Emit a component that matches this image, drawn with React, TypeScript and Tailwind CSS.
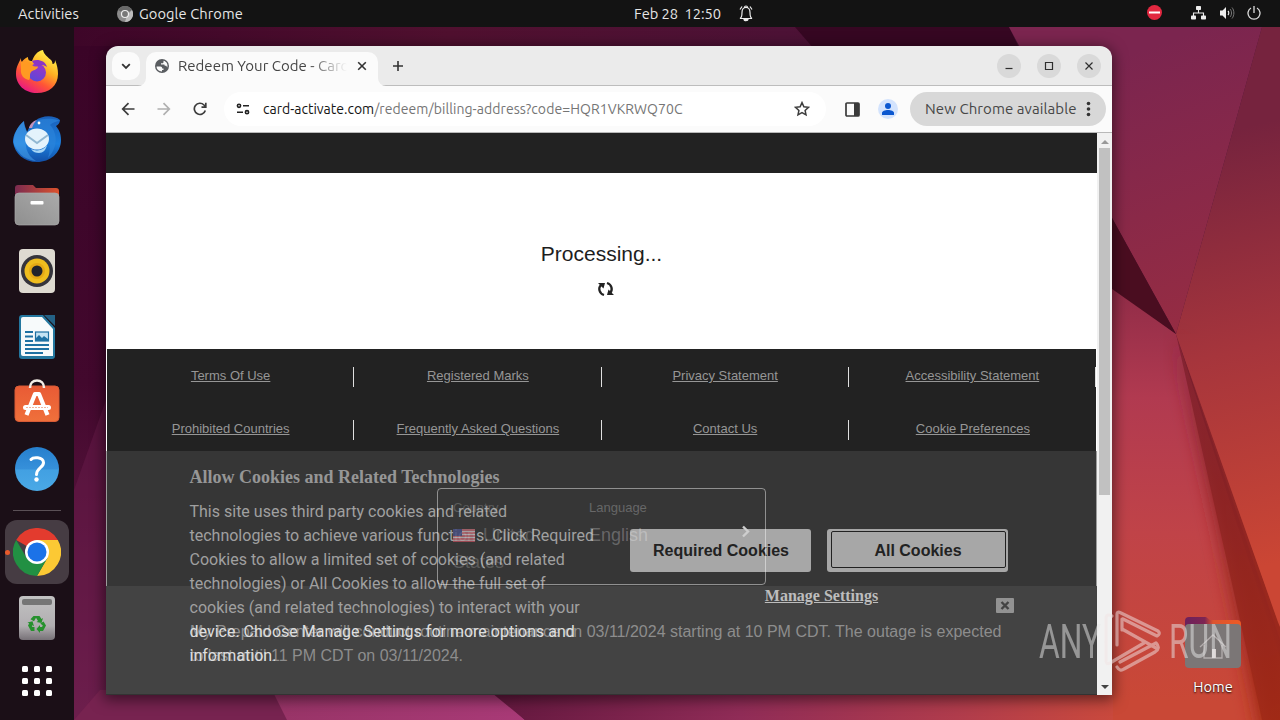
import type { ReactNode } from 'react';

const UI = "font-['Ubuntu','Noto_Sans',sans-serif]";
const ARIAL = "font-['Liberation_Sans',Arial,sans-serif]";
const SERIF = "font-['Liberation_Serif',serif]";

function Wallpaper() {
  return (
    <svg className="absolute inset-0" width="1280" height="720" viewBox="0 0 1280 720">
      <defs>
        <linearGradient id="wLeft" x1="0" y1="0" x2="0" y2="1">
          <stop offset="0" stopColor="#3a0427" />
          <stop offset="0.5" stopColor="#42082d" />
          <stop offset="1" stopColor="#6f204e" />
        </linearGradient>
        <linearGradient id="wTop" x1="0" y1="0" x2="1" y2="0">
          <stop offset="0" stopColor="#3a0427" />
          <stop offset="0.4" stopColor="#50102f" />
          <stop offset="0.7" stopColor="#4d1236" />
          <stop offset="1" stopColor="#42102f" />
        </linearGradient>
        <linearGradient id="wUpper" gradientUnits="userSpaceOnUse" x1="1110" y1="60" x2="1200" y2="320">
          <stop offset="0" stopColor="#7b254f" />
          <stop offset="1" stopColor="#952c43" />
        </linearGradient>
        <linearGradient id="wRight" gradientUnits="userSpaceOnUse" x1="1190" y1="140" x2="1290" y2="560">
          <stop offset="0" stopColor="#76233e" />
          <stop offset="0.5" stopColor="#a6353c" />
          <stop offset="1" stopColor="#cb4634" />
        </linearGradient>
        <linearGradient id="wLower" gradientUnits="userSpaceOnUse" x1="1140" y1="280" x2="1130" y2="700">
          <stop offset="0" stopColor="#8e2b47" />
          <stop offset="0.28" stopColor="#b13a50" />
          <stop offset="0.6" stopColor="#c04348" />
          <stop offset="1" stopColor="#c94836" />
        </linearGradient>
        <linearGradient id="wBand" gradientUnits="userSpaceOnUse" x1="1180" y1="340" x2="1270" y2="720">
          <stop offset="0" stopColor="#7b1f2d" />
          <stop offset="0.6" stopColor="#93251f" />
          <stop offset="1" stopColor="#a02916" />
        </linearGradient>
        <linearGradient id="wBottom" gradientUnits="userSpaceOnUse" x1="492" y1="0" x2="1112" y2="0">
          <stop offset="0" stopColor="#64183f" />
          <stop offset="0.4" stopColor="#902c57" />
          <stop offset="0.75" stopColor="#b03c4c" />
          <stop offset="1" stopColor="#c9493d" />
        </linearGradient>
        <linearGradient id="wMagenta" gradientUnits="userSpaceOnUse" x1="272" y1="0" x2="525" y2="0">
          <stop offset="0" stopColor="#983467" />
          <stop offset="1" stopColor="#a93a77" />
        </linearGradient>
        <filter id="soft"><feGaussianBlur stdDeviation="9" /></filter>
      </defs>
      <rect width="1280" height="720" fill="#4d1236" />
      <rect width="1120" height="60" fill="url(#wTop)" />
      <polygon points="795,27 1009,27 1020,50 815,50" fill="#360722" />
      <rect y="46" width="300" height="674" fill="url(#wLeft)" />
      <polygon points="106,400 74,490 74,720 300,720 260,600" fill="#6a1c4b" opacity=".45" />
      <polygon points="1009,27 1262,27 1176,334 1112,218" fill="url(#wUpper)" />
      <polygon points="1262,27 1280,27 1280,640 1176,334" fill="url(#wRight)" />
      <polygon points="1090,270 1176,334 1300,720 1000,720" fill="url(#wLower)" />
      <polygon points="1095,187 1176,334 1095,277" fill="#4a0d20" />
      <polygon points="1176,334 1290,640 1300,740 1262,740 1225,560" fill="url(#wBand)" filter="url(#soft)" />
      <polygon points="1176,334 1280,627 1280,720 1262,720 1230,575" fill="url(#wBand)" opacity=".8" />
      <polygon points="1176,334 1290,334 1290,650 1278,622" fill="url(#wRight)" />
      <polygon points="100,690 275,690 290,720 74,720" fill="#772350" />
      <polygon points="262,670 470,670 525,720 287,720" fill="url(#wMagenta)" />
      <polygon points="470,675 1113,675 1113,720 525,720" fill="url(#wBottom)" />
    </svg>
  );
}

function FirefoxIcon() {
  return (
    <svg className="-mt-0.5" width="44" height="46" viewBox="0 0 44 46">
      <defs>
        <linearGradient id="ff" x1="0.8" y1="0.1" x2="0.25" y2="1">
          <stop offset="0" stopColor="#fff04a" />
          <stop offset="0.35" stopColor="#ffae22" />
          <stop offset="0.65" stopColor="#ff5436" />
          <stop offset="1" stopColor="#e6138a" />
        </linearGradient>
        <linearGradient id="ffp" x1="0.8" y1="0" x2="0.3" y2="1">
          <stop offset="0" stopColor="#a033c6" />
          <stop offset="1" stopColor="#5a48d8" />
        </linearGradient>
      </defs>
      <path d="M28 1c1 5 5 7 8 10 2 2 1 4 2 4 2 0 2-3 2-4 2 5 3 9 3 14 0 12-9 19-21 19S1 36 1 25C1 17 4 14 6 9c0 2 0 3 1 4 1-2 3-4 6-5 0 3 1 4 4 4 2-5 5-10 11-11z" fill="url(#ff)" />
      <circle cx="22" cy="23.500" r="9" fill="url(#ffp)" />
      <path d="M6 13c5-2 10 0 12 4 3 1 5 0 5 1-1 3-5 3-7 5-2 3 0 5-2 8-5-1-9-5-8-11z" fill="#ff9a22" />
      <path d="M17 12c5-2 13-1 15 6-3-2-5-2-7-1-3 0-6-1-8-5z" fill="#8a35c5" />
    </svg>
  );
}

function ThunderbirdIcon() {
  return (
    <svg width="50" height="48" viewBox="0 0 50 48">
      <defs>
        <linearGradient id="tb" x1="0.5" y1="0" x2="0.5" y2="1">
          <stop offset="0" stopColor="#1a5fb8" />
          <stop offset="0.6" stopColor="#1d7fdd" />
          <stop offset="1" stopColor="#1250a8" />
        </linearGradient>
      </defs>
      <path d="M12 6C5 12 1 20 1 27c2 12 11 20 24 20s24-9 24-22c0-7-2-10-5-14 2-1 4-3 4-6-6-5-18-5-25 1-3 3-6 6-8 11-1-4-3-7-3-11z" fill="url(#tb)" />
      <path d="M12 6C5 12 1 20 2 29c5 12 13 16 22 17C14 40 12 30 15 17c-2-3-3-7-3-11z" fill="#4ba5ed" opacity=".5" />
      <path d="M18 13c2-5 8-9 14-9 8-1 14 1 16 2-3 0-8 2-10 4 8 8 8 23-2 33 4-12 1-22-5-29-4-1-8 0-13-1z" fill="#2b83da" opacity=".7" />
      <ellipse cx="25" cy="24" rx="12" ry="10.500" fill="#e4f3fc" />
      <path d="M14 20l11 8 11-8" fill="none" stroke="#91b8d2" strokeWidth="2" />
      <path d="M19 34c6 3 13 1 16-4-1 5-4 8-8 8-3 0-6-1-8-4z" fill="#a6d6f6" />
      <path d="M17 13c1-4 4-7 8-8-3 3-4 5-5 8z" fill="#c293bd" />
      <circle cx="27" cy="8" r="1.400" fill="#fff" />
    </svg>
  );
}

function FilesIcon() {
  return (
    <svg width="46" height="42" viewBox="0 0 46 42">
      <defs>
        <linearGradient id="fTop"><stop stopColor="#7b2b50" /><stop offset="1" stopColor="#dc522d" /></linearGradient>
        <linearGradient id="fBody" x1="0" y1="1" x2="1" y2="0"><stop stopColor="#8f8f8f" /><stop offset="1" stopColor="#aaa" /></linearGradient>
      </defs>
      <path d="M1 4a3 3 0 0 1 3-3h15l3 3h20a3 3 0 0 1 3 3v8H1z" fill="url(#fTop)" />
      <rect x="1" y="9" width="44" height="32" rx="4" fill="url(#fBody)" stroke="#aaa" strokeWidth=".7" />
      <rect x="16.500" y="17" width="13" height="3.500" rx="1" fill="#fff" />
    </svg>
  );
}

function RhythmboxIcon() {
  return (
    <svg width="38" height="46" viewBox="0 0 38 46">
      <rect x="1" y="1" width="36" height="44" rx="4" fill="#dedad1" />
      <circle cx="19" cy="23" r="16" fill="#35343c" />
      <circle cx="19" cy="23" r="12.500" fill="#efbd1e" />
      <circle cx="19" cy="23" r="8" fill="#e5a915" />
      <circle cx="19" cy="23" r="5.500" fill="#22242c" />
    </svg>
  );
}

function WriterIcon() {
  return (
    <svg width="38" height="46" viewBox="0 0 38 46">
      <path d="M4 1h21l12 13v28a3 3 0 0 1-3 3H4a3 3 0 0 1-3-3V4a3 3 0 0 1 3-3z" fill="#24779f" />
      <path d="M26 1h11v11z" fill="#246185" />
      <path d="M5 3h19l11 12v27H5a2 2 0 0 1-2-2V5a2 2 0 0 1 2-2z" fill="#f7fafb" />
      <path d="M7 18h8M7 22.500h8M7 27h8M7 31h24M7 35h24M7 39h18" stroke="#1e71a3" strokeWidth="1.900" />
      <rect x="17.500" y="18" width="13" height="9" fill="#c4e3f3" stroke="#1e71a3" strokeWidth="1.200" />
      <path d="M18 27v-3l3-3 3 3 2-2 4 3v2z" fill="#1e71a3" />
    </svg>
  );
}

function SoftwareIcon() {
  return (
    <svg width="46" height="46" viewBox="0 0 46 46">
      <defs><linearGradient id="bag" x2="0" y2="1"><stop stopColor="#e95b35" /><stop offset="1" stopColor="#ef703b" /></linearGradient></defs>
      <rect x="1" y="8" width="44" height="35.500" rx="4" fill="url(#bag)" stroke="#d85b36" />
      <path d="M16 10c0-5 3-7.500 7-7.500s7 2.500 7 7.500" fill="none" stroke="#f4eee6" strokeWidth="2.500" />
      <path d="M12.500 37l8.500-21h4l8.500 21" fill="none" stroke="#fff" strokeWidth="4.200" strokeLinejoin="round" />
      <rect x="9" y="27" width="28" height="5" rx="2.500" fill="#fff" />
      <path d="M12 29.500h22" stroke="#f0a183" strokeWidth=".8" strokeDasharray="2 1" />
    </svg>
  );
}

function HelpIcon() {
  return (
    <svg width="46" height="46" viewBox="0 0 46 46">
      <defs><linearGradient id="help" x2="0" y2="1"><stop stopColor="#267fcd" /><stop offset=".5" stopColor="#3690da" /><stop offset=".52" stopColor="#42a0e2" /><stop offset="1" stopColor="#4aa9e6" /></linearGradient></defs>
      <circle cx="23" cy="23" r="22" fill="url(#help)" />
      <path d="M17 13.500c2-2.500 12-3 12.500 3 .3 5-7 5.500-7 12" fill="none" stroke="#fff" strokeWidth="3" strokeLinecap="round" />
      <circle cx="22.500" cy="33.500" r="2.200" fill="#fff" />
    </svg>
  );
}

function ChromeIcon() {
  return (
    <svg width="48" height="48" viewBox="0 0 48 48">
      <path d="M24 24L3.200 12A24 24 0 0 1 44.800 12z" fill="#e33b2e" />
      <path d="M24 12H44.800A24 24 0 0 1 24 48L34.400 30z" fill="#fcc934" />
      <path d="M13.600 30L3.200 12A24 24 0 0 0 24 48L34.400 30z" fill="#229043" />
      <circle cx="24" cy="24" r="12" fill="#fff" />
      <circle cx="24" cy="24" r="9.500" fill="#1b72e8" />
    </svg>
  );
}

function TrashIcon() {
  return (
    <svg width="38" height="46" viewBox="0 0 38 46">
      <defs><linearGradient id="bin" x2="0" y2="1"><stop stopColor="#c2c2c2" /><stop offset=".68" stopColor="#b1aeb1" /><stop offset="1" stopColor="#777177" /></linearGradient></defs>
      <rect x="1" y="1" width="36" height="44" rx="4" fill="url(#bin)" />
      <rect x="4" y="4" width="30" height="6" rx="2" fill="#757575" />
      <g fill="#26912d">
        <path d="M15.500 21h6l2 3 1.500-1-1.500 5-5-1 1.500-1-2-3.200-2 3.400-3.500-2z" />
        <path d="M25.500 26.500l2.500 4-3 5.500h-3v2l-3.500-4 3.500-4v2h2l.8-1.500-2.500-2z" />
        <path d="M16.500 32v4H13l-3-5.500 1.200-2-1.700-1 5-1.200 1.500 5-1.700-1-.5.8.6.900z" />
      </g>
    </svg>
  );
}

function DockItem({ children }: { children: ReactNode }) {
  return <div className="flex h-[66px] w-full items-center justify-center">{children}</div>;
}

function Dock() {
  return (
    <aside className="relative flex w-[74px] flex-col items-center bg-[#1b0f17] pt-[13px]">
      <DockItem><FirefoxIcon /></DockItem>
      <DockItem><ThunderbirdIcon /></DockItem>
      <DockItem><FilesIcon /></DockItem>
      <DockItem><RhythmboxIcon /></DockItem>
      <DockItem><WriterIcon /></DockItem>
      <div className="flex h-[66px] items-center justify-center pb-[5px]"><SoftwareIcon /></div>
      <DockItem><HelpIcon /></DockItem>
      <div className="mt-[8px] h-px w-12 bg-[#5a5056]" />
      <div className="relative mt-[9px] flex size-16 items-center justify-center rounded-xl bg-[#463c43]">
        <span className="absolute left-0 size-[5px] rounded-full bg-[#e95a2b]" />
        <ChromeIcon />
      </div>
      <div className="mt-[11px]"><TrashIcon /></div>
      <div className="mt-[25px] grid grid-cols-3 gap-1.5">
        {Array.from({ length: 9 }, (_, i) => <span key={i} className="size-1.5 rounded-[1.5px] bg-white" />)}
      </div>
    </aside>
  );
}

function TopBar() {
  return (
    <header className={`relative flex h-[27px] items-center bg-[#131313] text-[14.67px] text-[#e6e6e6] ${UI}`}>
      <span className="ml-[18px] w-[99px] tracking-[0.08px]">Activities</span>
      <svg width="16" height="16" viewBox="0 0 16 16">
        <circle cx="8" cy="8" r="8" fill="#8b8b8b" />
        <path d="M8 8L1 4a8 8 0 0 1 14 0z" fill="#686868" />
        <path d="M10 9L8 16A8 8 0 0 0 15 4z" fill="#bcbcbc" />
        <circle cx="8" cy="8" r="3.500" fill="#777" stroke="#eee" strokeWidth="1.200" />
      </svg>
      <span className="ml-1.5 w-[495px] tracking-[0.08px]">Google Chrome</span>
      <span className="whitespace-pre tracking-[-0.05px]">Feb 28  12:50</span>
      <svg className="absolute left-[738px] top-[5px]" width="16" height="17" viewBox="0 0 16 17" fill="none" stroke="#eee" strokeWidth="1.200">
        <path d="M2 13.500c2-1 2-3 2-6C4 4.500 5.500 2.500 8 2.500s4 2 4 5c0 3 0 5 2 6zM6.500 2.500C6.500.5 9.500.5 9.500 2.500M2 4.500L4 1.500M14 4.500L12 1.500" />
        <path d="M6 14.500h4c0 1.500-4 1.500-4 0z" fill="#eee" />
      </svg>
      <div className="absolute right-[19px] top-[5px] flex items-center">
        <svg width="15" height="15" viewBox="0 0 15 15"><circle cx="7.500" cy="7.500" r="7.500" fill="#e22840" /><rect x="2" y="6.500" width="11" height="2" fill="#fff" /></svg>
        <svg className="ml-7" width="17" height="14" viewBox="0 0 17 14" fill="#eee">
          <rect x="6" y="0" width="5" height="4" rx=".8" /><rect x="1" y="9.500" width="5" height="4" rx=".8" /><rect x="11" y="9.500" width="5" height="4" rx=".8" />
          <path d="M8.500 4v3M3.500 10V7h10v3" fill="none" stroke="#eee" strokeWidth="1.100" />
        </svg>
        <svg className="ml-3" width="16" height="14" viewBox="0 0 16 14" fill="none">
          <path d="M1 4.500h2.500L7 1v12L3.500 9.500H1z" fill="#eee" />
          <path d="M9 5c1 1 1 3 0 4" stroke="#eee" strokeWidth="1.200" />
          <path d="M11 3c2 2 2 6 0 8M13 1.500c2.500 3 2.500 8 0 11" stroke="#777" />
        </svg>
        <svg className="ml-3" width="14" height="14" viewBox="0 0 14 14" fill="none" stroke="#ddd" strokeWidth="1.300">
          <path d="M4 2a6 6 0 1 0 6 0M7 0v7" />
        </svg>
      </div>
    </header>
  );
}

function TabStrip() {
  return (
    <div className="relative flex h-10 shrink-0 rounded-t-xl border-b border-[#bdbdbd] bg-[#ebebeb]">
      <div className="ml-1.5 mt-1.5 flex size-7 items-center justify-center rounded-[10px] bg-[#fbfbfb]">
        <svg width="10" height="7" viewBox="0 0 10 7" fill="none" stroke="#333" strokeWidth="1.800"><path d="M1.200 1.200L5 5l3.800-3.800" /></svg>
      </div>
      <div className="relative ml-1.5 mt-1.5 -mb-px flex w-[232px] items-center rounded-t-[10px] bg-[#fbfbfb] pb-[6px]">
        <svg className="absolute -left-2 bottom-0" width="8" height="8"><path d="M8 0v8H0a8 8 0 0 0 8-8z" fill="#fbfbfb" /></svg>
        <svg className="absolute -right-2 bottom-0" width="8" height="8"><path d="M0 0v8h8a8 8 0 0 1-8-8z" fill="#fbfbfb" /></svg>
        <svg className="ml-[9px]" width="14" height="14" viewBox="0 0 14 14">
          <circle cx="7" cy="7" r="7" fill="#5a5d61" />
          <path d="M1.600 7.500h3.600c1.500 0 2 .8 2 2h1.300v1.500H7v1.400C4 12.500 1.500 10.500 1.600 7.500z" fill="#fbfbfb" />
          <path d="M8.500 1.700v1.200c0 .8-.5 1.300-1.300 1.300H6v1.300h2.700c.8 0 1 .5 1 1.300h1.600l.9 1.700C13.300 5.500 11.500 2.300 8.500 1.700z" fill="#fbfbfb" />
        </svg>
        <span className={`ml-[9px] w-[169px] overflow-hidden whitespace-nowrap text-[15px] leading-5 text-[#454545] [mask-image:linear-gradient(to_right,black_130px,transparent_169px)] ${UI}`}>Redeem Your Code - Card</span>
        <svg className="ml-[10px]" width="10" height="10" viewBox="0 0 10 10" stroke="#333" strokeWidth="1.600"><path d="M1.200 1.200l7.600 7.600M8.800 1.200L1.200 8.800" /></svg>
      </div>
      <svg className="ml-[15px] mt-[15px]" width="10" height="10" viewBox="0 0 10 10" stroke="#333" strokeWidth="1.600"><path d="M5 0v10M0 5h10" /></svg>
      <div className="ml-auto mr-[11px] mt-2 flex gap-[16px]">
        {['M2.500 8.500h7', 'M2.500 2.500h7v7h-7z', 'M2.500 2.500l7 7M9.500 2.500l-7 7'].map(d => (
          <span key={d} className="flex size-6 items-center justify-center rounded-full bg-[#d9d9d9]">
            <svg width="12" height="12" viewBox="0 0 12 12" fill="none" stroke="#2e2e2e" strokeWidth="1.200"><path d={d} /></svg>
          </span>
        ))}
      </div>
    </div>
  );
}

function Toolbar() {
  return (
    <div className={`flex h-[47px] shrink-0 items-center border-b border-[#b9b9b9] bg-[#fbfbfb] ${UI}`}>
      <svg className="ml-[15px]" width="14" height="14" viewBox="0 0 14 14" fill="none" stroke="#3c3c3c" strokeWidth="1.700"><path d="M13.500 7H2M7.500 1.200L1.700 7l5.800 5.800" /></svg>
      <svg className="ml-[22px]" width="14" height="14" viewBox="0 0 14 14" fill="none" stroke="#b0b0b0" strokeWidth="1.700"><path d="M.5 7H12M6.500 1.200L12.300 7l-5.800 5.800" /></svg>
      <svg className="ml-[22px]" width="14" height="14" viewBox="0 0 14 14" fill="none" stroke="#3c3c3c" strokeWidth="1.700"><path d="M12.300 8.500A5.600 5.600 0 1 1 11 3l1.500 1.500M12.800.8v4.400H8.500" /></svg>
      <div className="ml-[17px] flex h-[34px] w-[602px] items-center rounded-full bg-white">
        <svg className="ml-[12px]" width="14" height="12" viewBox="0 0 14 12" fill="none" stroke="#222" strokeWidth="1.600"><circle cx="3" cy="2.800" r="1.600" /><path d="M7 2.800h6M1 9.200h6" /><circle cx="11" cy="9.200" r="1.600" /></svg>
        <div className="ml-[13px] w-[531px] whitespace-nowrap text-[14px] leading-5 text-[#757575]">
          <span className="text-[#151515]">card-activate.com</span>
          <span className="tracking-[0.07px]">/redeem/billing-address?code=HQR1VKRWQ70C</span>
        </div>
        <svg width="16" height="16" viewBox="0 0 16 16" fill="none" stroke="#3c3c3c" strokeWidth="1.500"><path d="M8 1.600l1.900 4.200 4.600.5-3.400 3.100.9 4.500-4-2.300-4 2.300.9-4.500L1.500 6.300l4.600-.5z" /></svg>
      </div>
      <svg className="ml-[19px]" width="15" height="15" viewBox="0 0 15 15"><rect x="1" y="1" width="13" height="13" rx="1" fill="none" stroke="#3a3a3a" strokeWidth="1.700" /><path d="M9 1h5v13H9z" fill="#3a3a3a" /></svg>
      <svg className="ml-[18px]" width="20" height="20" viewBox="0 0 20 20"><circle cx="10" cy="10" r="10" fill="#d3e3fd" /><circle cx="10" cy="7" r="3" fill="#0b57d0" /><path d="M4 16v-2c0-4 12-4 12 0v2z" fill="#0b57d0" /></svg>
      <div className="ml-[12px] flex h-[34px] w-[196px] items-center rounded-full bg-[#d8d8d8] text-[15px] text-[#474747]">
        <span className="ml-[15px] w-[161px] whitespace-nowrap tracking-[0.08px]">New Chrome available</span>
        <svg width="5" height="16" viewBox="0 0 5 16" fill="#333"><circle cx="2.500" cy="2.500" r="1.800" /><circle cx="2.500" cy="8" r="1.800" /><circle cx="2.500" cy="13.500" r="1.800" /></svg>
      </div>
    </div>
  );
}

const footerLinks = [
  'Terms Of Use', 'Registered Marks', 'Privacy Statement', 'Accessibility Statement',
  'Prohibited Countries', 'Frequently Asked Questions', 'Contact Us', 'Cookie Preferences',
];

function CookieNotice() {
  return (
    <div className="absolute inset-x-0 top-[318px] flex h-[244px] border-x border-[#9c9c9c] bg-[#363636]">
      <div className="absolute -inset-x-px bottom-0 h-[109px] border-b border-[#333] bg-[#434343]">
        <p className={`ml-[84px] mt-[34px] whitespace-nowrap text-[16px] leading-6 text-[#8d8d8d] ${ARIAL}`}>
          My Prepaid Center will conduct routine maintenance on 03/11/2024 starting at 10 PM CDT. The outage is expected<br />
          to last until 11 PM CDT on 03/11/2024.
        </p>
        <svg className="absolute left-[890px] top-[12px]" width="18" height="15" viewBox="0 0 18 15"><rect width="18" height="15" rx="1" fill="#929292" /><path d="M5.500 4l7 7M12.500 4l-7 7" stroke="#434343" strokeWidth="2.400" /></svg>
      </div>
      <div className="relative ml-[82.5px] w-[440.5px] pt-4">
        <h2 className={`whitespace-nowrap text-[18px] font-bold leading-5 text-[#969696] ${SERIF}`}>Allow Cookies and Related Technologies</h2>
        <p className="mt-[13px] whitespace-nowrap font-['Roboto',sans-serif] text-[16px] leading-6 text-[#a0a0a0]">
          This site uses third party cookies and related<br />
          technologies to achieve various functions. Click Required<br />
          Cookies to allow a limited set of cookies (and related<br />
          technologies) or All Cookies to allow the full set of<br />
          cookies (and related technologies) to interact with your<br />
          <span className="text-[#dedede]">device. Choose Manage Settings for more options and<br />information.</span>
        </p>
      </div>
      <div className={`relative pt-[78px] ${ARIAL}`}>
        <div className="flex gap-4 text-[16px] font-bold text-[#222]">
          <button className="h-[43px] w-[181px] rounded-[3px] bg-[#a7a7a7] pl-px">Required Cookies</button>
          <button className="h-[43px] w-[181px] rounded-[3px] bg-[#a7a7a7] pb-1 pl-1 pr-0.5 pt-0.5">
            <span className="flex h-[37px] items-center justify-center rounded-[2px] border border-[#222] pr-px pt-0.5">All Cookies</span>
          </button>
        </div>
        <div className={`ml-[5px] mt-[14px] text-center text-[16px] font-bold leading-5 text-[#bdbdbd] underline ${SERIF}`}>Manage Settings</div>
      </div>
    </div>
  );
}

function LocalePicker() {
  return (
    <div className={`absolute left-[331px] top-[355px] flex h-[97px] w-[329px] rounded-[4px] border border-white/45 text-white/25 ${ARIAL}`}>
      <div className="ml-[15px] w-[136px] pt-[11px] text-white/20">
        <div className="text-[13px] leading-4">Country</div>
        <div className="mt-1.5 flex text-[18px] leading-[27px]">
          <svg className="mr-2 mt-[7px]" width="22" height="13" viewBox="0 0 22 13" opacity=".85">
            <rect width="22" height="13" fill="#b9b2b4" />
            <path d="M0 1h22M0 4h22M0 7h22M0 10h22M0 12.500h22" stroke="#ad4c57" strokeWidth="1.300" />
            <rect width="9" height="7" fill="#495080" />
          </svg>
          United
        </div>
        <div className="text-[18px] leading-[27px]">States</div>
      </div>
      <div className="pt-[11px]">
        <div className="text-[13px] leading-4">Language</div>
        <div className="mt-1.5 text-[18px] leading-[27px]">English</div>
      </div>
      <svg className="absolute left-[303px] top-[36px]" width="10" height="13" viewBox="0 0 10 13" fill="none" stroke="#cecece" strokeWidth="2.400"><path d="M2 1.500l5 5-5 5" /></svg>
    </div>
  );
}

function Page() {
  return (
    <div className={`relative flex min-h-0 grow bg-white ${ARIAL}`}>
      <main className="relative flex w-[991px] flex-col overflow-hidden">
        <div className="h-10 shrink-0 bg-[#222]" />
        <div className="flex h-44 shrink-0 flex-col items-center pt-[66px]">
          <div className="text-[21px] leading-[30px] text-[#1d1d1d]">Processing...</div>
          <svg className="ml-2 mt-[12px]" width="18" height="16" viewBox="0 0 18 16" fill="none" stroke="#222" strokeWidth="2.300">
            <path d="M7 14C2 12.500 1 7 4 4M10 2c5 1.500 6 7 3 10" />
            <path d="M1 2h7L6.500 7.500zM17 14h-7l1.500-5.500z" fill="#222" stroke="none" />
          </svg>
        </div>
        <footer className="mx-px grow bg-[#222] pt-[18px]">
          <div className="grid grid-cols-4 gap-y-[33px]">
            {footerLinks.map((link, i) => (
              <a key={link} className={`flex h-5 items-center justify-center pb-0.5 pl-px text-[13px] text-[#969696] underline ${i === 7 ? '' : 'border-r border-[#e0e0e0]'}`}>{link}</a>
            ))}
          </div>
        </footer>
        <CookieNotice />
        <LocalePicker />
      </main>
      <div className="flex w-[15px] flex-col items-center bg-[#f1f1f1]">
        <svg className="mt-[6px]" width="8" height="5" viewBox="0 0 8 5"><path d="M0 5l4-4 4 4z" fill="#999" /></svg>
        <div className="mt-[4px] h-[347px] w-[11px] bg-[#c1c1c1]" />
        <svg className="mb-[5px] mt-auto" width="8" height="5" viewBox="0 0 8 5"><path d="M0 0l4 4 4-4z" fill="#444" /></svg>
      </div>
    </div>
  );
}

function HomeFolder() {
  return (
    <div className={`absolute left-[1111px] top-[589px] flex w-14 flex-col items-center text-[14.67px] text-white ${UI}`}>
      <svg width="56" height="53" viewBox="0 0 56 53">
        <defs><linearGradient id="home"><stop stopColor="#6c215c" /><stop offset=".35" stopColor="#7e2552" /><stop offset=".5" stopColor="#dc5430" /><stop offset="1" stopColor="#ec5a25" /></linearGradient></defs>
        <path d="M0 5a4 4 0 0 1 4-4h17l4 3h27a4 4 0 0 1 4 4v8H0z" fill="url(#home)" />
        <rect y="8" width="56" height="44" rx="4" fill="#7b7676" />
        <path d="M15 31l13-12 13 12M19 29v13h18V29" fill="none" stroke="#b3adad" strokeWidth="1.300" />
        <rect x="27" y="33" width="4" height="9" fill="#d8d0d0" />
      </svg>
      <span className="mt-2 leading-5 [text-shadow:0_1px_2px_#000]">Home</span>
    </div>
  );
}

function Watermark() {
  return (
    <svg className="absolute left-[1036px] top-[606px] opacity-50" width="220" height="70" viewBox="0 0 220 70" fill="#e8e8e8" fontFamily="Roboto" fontWeight="400">
      <text x="3" y="52" fontSize="49" textLength="62" lengthAdjust="spacingAndGlyphs">ANY</text>
      <text x="133" y="52" fontSize="49" textLength="63" lengthAdjust="spacingAndGlyphs">RUN</text>
      <g fill="none" stroke="#f2e5e5" strokeWidth="3.200" strokeLinejoin="round" strokeLinecap="round">
        <path d="M81 39V8q0-3 4-1l37 18q3 3-1 5L87 13" />
        <path d="M86 23l34 19M86 24v-11" />
        <path d="M76 10q-6-3-6 3v42q0 4 4 2l34-20" />
        <path d="M81 61q3 5 7 2l31-17q6-4 1-9L84 56" />
      </g>
    </svg>
  );
}

export default function App() {
  return (
    <div className="relative flex h-[720px] w-[1280px] flex-col overflow-hidden">
      <Wallpaper />
      <TopBar />
      <div className="relative flex grow">
        <Dock />
        <div className="relative grow">
          <HomeFolder />
          <section className="absolute left-8 top-[19px] flex h-[649px] w-[1006px] flex-col rounded-t-xl shadow-[0_3px_14px_2px_rgba(0,0,0,0.5)]">
            <TabStrip />
            <Toolbar />
            <Page />
          </section>
        </div>
      </div>
      <Watermark />
    </div>
  );
}
